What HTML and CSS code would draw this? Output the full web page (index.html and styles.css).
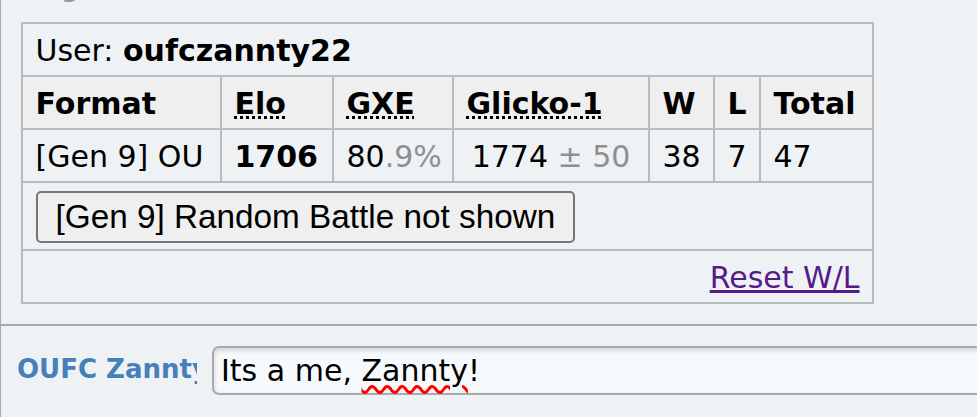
FILE: index.html
```html
<!DOCTYPE html>
<html lang="en">
<head>
    <meta charset="UTF-8">
    <meta name="viewport" content="width=device-width, initial-scale=1.0">
    <title>Rank - oufczannty22</title>
    <link rel="stylesheet" href="styles.css">
</head>
<body>
    <div class="room">
        <div class="chat-log">
            <div class="log-line">Log</div>

            <table class="rank-table">
                <colgroup>
                    <col class="col-format">
                    <col class="col-elo">
                    <col class="col-gxe">
                    <col class="col-glicko">
                    <col class="col-w">
                    <col class="col-l">
                    <col class="col-total">
                </colgroup>
                <tr>
                    <td colspan="7">User: <strong>oufczannty22</strong></td>
                </tr>
                <tr>
                    <th>Format</th>
                    <th><abbr title="Elo rating">Elo</abbr></th>
                    <th><abbr title="user's percentage chance of winning a random battle">GXE</abbr></th>
                    <th><abbr title="Glicko-1 rating: rating ± deviation">Glicko-1</abbr></th>
                    <th>W</th>
                    <th>L</th>
                    <th>Total</th>
                </tr>
                <tr>
                    <td>[Gen 9] OU</td>
                    <td><strong>1706</strong></td>
                    <td>80<span class="muted">.9%</span></td>
                    <td class="center">1774<span class="muted"> ± 50</span></td>
                    <td>38</td>
                    <td>7</td>
                    <td>47</td>
                </tr>
                <tr>
                    <td colspan="7"><button class="toggle-btn">[Gen 9] Random Battle not shown</button></td>
                </tr>
                <tr>
                    <td colspan="7" class="right"><a href="#" class="reset-link">Reset W/L</a></td>
                </tr>
            </table>
        </div>

        <div class="chatbox">
            <label class="chat-name">OUFC Zannty</label>
            <div class="textbox">Its a me, <span class="misspelled">Zannty</span>!</div>
        </div>
    </div>
</body>
</html>
```

FILE: styles.css
```css
* {
    box-sizing: border-box;
}

body {
    margin: 0;
    background-color: #eef2f5;
    font-family: 'DejaVu Sans', Verdana, sans-serif;
    font-size: 30px;
    color: #000;
    overflow: hidden;
}

.room {
    border-left: 1px solid #aaa;
    height: 417px;
}

.chat-log {
    height: 326px;
    border-bottom: 2px solid #aaa;
    overflow: hidden;
}

.log-line {
    margin-top: -32px;
    padding-left: 25px;
    line-height: 36px;
    color: #999;
}

.rank-table {
    margin: 18px 0 0 20px;
    border-collapse: collapse;
    table-layout: fixed;
    width: 851px;
}

.col-format { width: 199px; }
.col-elo { width: 112px; }
.col-gxe { width: 120px; }
.col-glicko { width: 196px; }
.col-w { width: 65px; }
.col-l { width: 46px; }
.col-total { width: 113px; }

.rank-table td,
.rank-table th {
    border: 2px solid #bbb;
    padding: 8.5px 12.5px 6.5px;
    line-height: 36px;
    text-align: left;
    white-space: nowrap;
}

.rank-table th {
    background-color: #efefef;
    font-weight: bold;
}

.rank-table abbr {
    text-decoration: underline dotted;
}

.rank-table .center {
    text-align: center;
}

.rank-table .right {
    text-align: right;
}

.muted {
    color: #8f8f8f;
}

.toggle-btn {
    display: block;
    height: 52px;
    margin-top: -1px;
    padding: 0 18px;
    border: 2px solid #767676;
    border-radius: 5px;
    background-color: #efefef;
    font-family: 'Liberation Sans', Arial, sans-serif;
    font-size: 33.3px;
    color: #000;
}

.reset-link {
    color: #551a8b;
}

.chatbox {
    display: flex;
    align-items: flex-start;
    padding: 20px 0 0 16px;
    overflow: hidden;
}

.chat-name {
    flex: none;
    width: 180px;
    margin: 8px 15px 0 0;
    overflow: hidden;
    white-space: nowrap;
    font-size: 26px;
    line-height: 30px;
    font-weight: bold;
    color: #4580ba;
}

.textbox {
    flex: none;
    width: 820px;
    height: 49px;
    padding: 3px 7px;
    border: 2px solid #aaa;
    border-radius: 7px;
    background-color: #f7fafd;
    box-shadow: inset 0 2px 5px #ccc;
    line-height: 39px;
    white-space: nowrap;
}

.misspelled {
    text-decoration: underline wavy #f00;
    text-decoration-thickness: 2.5px;
    text-underline-offset: 4px;
}
```
